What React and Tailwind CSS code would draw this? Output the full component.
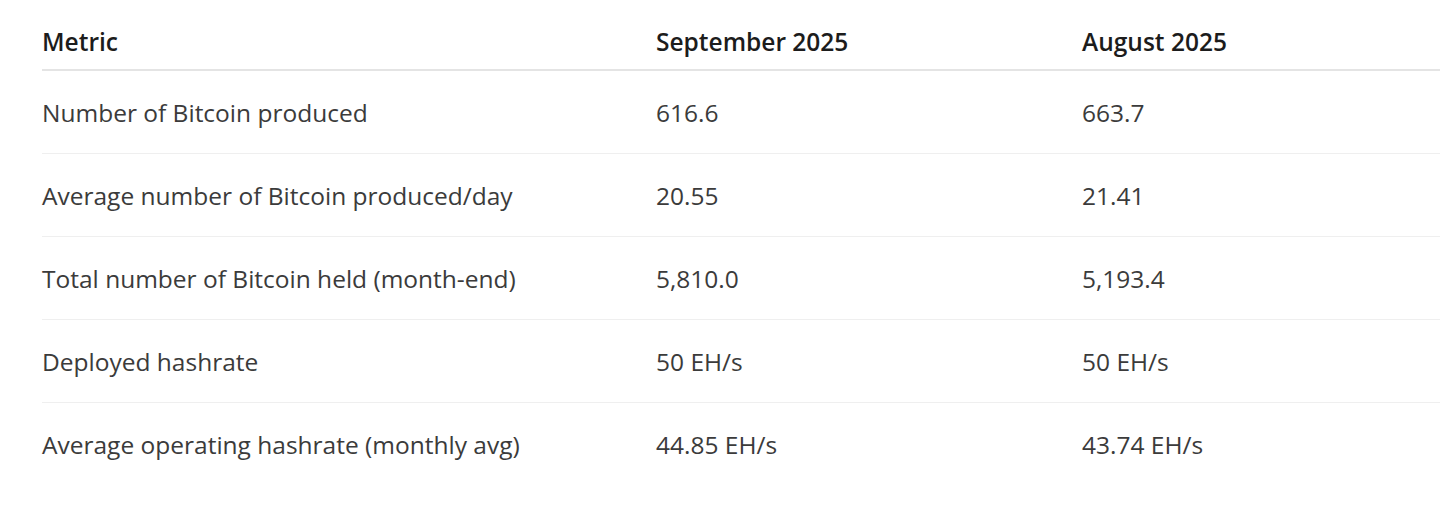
import React from 'react';

const rows = [
  ['Number of Bitcoin produced', '616.6', '663.7'],
  ['Average number of Bitcoin produced/day', '20.55', '21.41'],
  ['Total number of Bitcoin held (month-end)', '5,810.0', '5,193.4'],
  ['Deployed hashrate', '50 EH/s', '50 EH/s'],
  ['Average operating hashrate (monthly avg)', '44.85 EH/s', '43.74 EH/s'],
];

const App = () => {
  return (
    <div className="w-[1440px] h-[506px] bg-white overflow-hidden pt-[14px] pl-[42px] font-['Open_Sans',sans-serif]">
      <table className="w-[1398px] border-collapse text-left text-[24.5px]">
        <thead>
          <tr className="h-[56px] border-b-2 border-[#e4e4e4]">
            <th className="w-[614px] p-0 pt-[2px] font-semibold text-[#1c1c1c]">Metric</th>
            <th className="w-[426px] p-0 pt-[2px] font-semibold text-[#1c1c1c]">September 2025</th>
            <th className="p-0 pt-[2px] font-semibold text-[#1c1c1c]">August 2025</th>
          </tr>
        </thead>
        <tbody>
          {rows.map((row, i) => (
            <tr
              key={row[0]}
              className={i < rows.length - 1 ? 'h-[83px] border-b border-[#efefef]' : 'h-[83px]'}
            >
              {row.map((cell, j) => (
                <td key={j} className="p-0 pt-[3px] text-[#3b3b3b]">{cell}</td>
              ))}
            </tr>
          ))}
        </tbody>
      </table>
    </div>
  );
};

export default App;
